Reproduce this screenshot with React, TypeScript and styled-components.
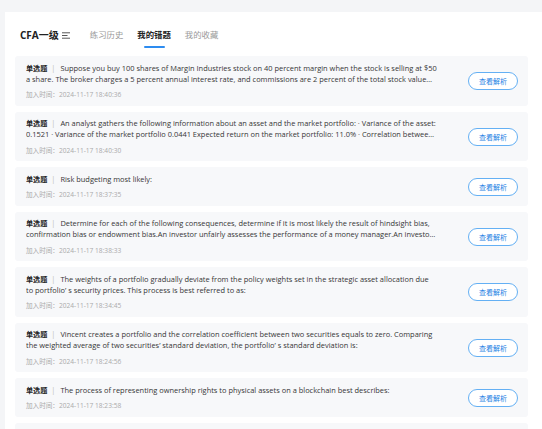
import React from "react";
import styled, { createGlobalStyle } from "styled-components";

const GlobalStyle = createGlobalStyle`
  html, body { margin: 0; padding: 0; }
  body {
    background: #f4f5f7;
    font-family: "Open Sans", "Noto Sans CJK SC", sans-serif;
    color: #333;
    overflow: hidden;
  }
`;

const Panel = styled.div`
  margin: 12px 0 0 5px;
  background: #fff;
  padding: 0 14px 0 10px;
  min-height: 420px;
`;

const Header = styled.div`
  display: flex;
  align-items: flex-start;
  height: 44px;
  box-sizing: border-box;
  padding: 17px 0 0 5px;
`;

const Title = styled.div`
  display: flex;
  align-items: center;
  gap: 3px;
  font-size: 10px;
  line-height: 12px;
  font-weight: 700;
  color: #222;
  margin-right: 20px;
`;

const Tabs = styled.div`
  display: flex;
  gap: 14px;
`;

const Tab = styled.div<{ $active?: boolean }>`
  display: flex;
  flex-direction: column;
  align-items: center;
  font-size: 8.4px;
  line-height: 12px;
  font-weight: ${(p) => (p.$active ? 700 : 400)};
  color: ${(p) => (p.$active ? "#222" : "#9a9a9a")};
`;

const Indicator = styled.div<{ $active?: boolean }>`
  width: 21px;
  height: 1.5px;
  margin-top: 5px;
  border-radius: 1px;
  background: ${(p) => (p.$active ? "#2d8cf0" : "transparent")};
`;

const List = styled.div`
  display: flex;
  flex-direction: column;
  gap: 6px;
`;

const Card = styled.div`
  display: flex;
  align-items: center;
  background: #f7f8fa;
  border-radius: 3px;
  padding: 6.5px 10px 5.5px 11px;
`;

const Body = styled.div`
  flex: 1;
  min-width: 0;
  max-width: 411px;
`;

const Question = styled.div`
  font-size: 7.45px;
  line-height: 11px;
  color: #363636;
  display: -webkit-box;
  -webkit-line-clamp: 2;
  -webkit-box-orient: vertical;
  overflow: hidden;
`;

const Kind = styled.span`
  font-weight: 700;
  color: #222;
  font-size: 7.1px;
`;

const Sep = styled.span`
  color: #bbb;
  margin: 0 5px 0 4px;
`;

const Time = styled.div`
  margin-top: 5.5px;
  font-size: 6.6px;
  line-height: 10px;
  color: #aaa;
`;

const Button = styled.button`
  margin-left: auto;
  width: 50px;
  height: 18px;
  flex-shrink: 0;
  border: 1px solid #64b0f4;
  border-radius: 9px;
  background: #fff;
  color: #1f82e4;
  font-family: "Noto Sans CJK SC", sans-serif;
  font-size: 7px;
  padding: 0;
  line-height: 16px;
`;

const MenuIcon = () => (
  <svg width="8" height="7" viewBox="0 0 8 7" fill="none" stroke="#444" strokeWidth="0.9">
    <line x1="0" y1="0.8" x2="8" y2="0.8" />
    <line x1="0" y1="3.5" x2="5.5" y2="3.5" />
    <line x1="0" y1="6.2" x2="8" y2="6.2" />
  </svg>
);

const items = [
  {
    q: "Suppose you buy 100 shares of Margin Industries stock on 40 percent margin when the stock is selling at $50 a share. The broker charges a 5 percent annual interest rate, and commissions are 2 percent of the total stock value on both the purchase and sale of the stock.",
    t: "2024-11-17 18:40:36",
  },
  {
    q: "An analyst gathers the following information about an asset and the market portfolio: · Variance of the asset: 0.1521 · Variance of the market portfolio 0.0441 Expected return on the market portfolio: 11.0% · Correlation between the asset and the market portfolio: 0.6",
    t: "2024-11-17 18:40:30",
  },
  { q: "Risk budgeting most likely:", t: "2024-11-17 18:37:35" },
  {
    q: "Determine for each of the following consequences, determine if it is most likely the result of hindsight bias, confirmation bias or endowment bias.An investor unfairly assesses the performance of a money manager.An investor overvalues an asset he owns.",
    t: "2024-11-17 18:38:33",
  },
  {
    q: "The weights of a portfolio gradually deviate from the policy weights set in the strategic asset allocation due to portfolio’  s security prices. This process is best referred to as:",
    t: "2024-11-17 18:34:45",
  },
  {
    q: "Vincent creates a portfolio and the correlation coefficient between two securities equals to zero. Comparing the weighted average of two securities’   standard deviation, the portfolio’  s standard deviation is:",
    t: "2024-11-17 18:24:56",
  },
  {
    q: "The process of representing ownership rights to physical assets on a blockchain best describes:",
    t: "2024-11-17 18:23:58",
  },
  {
    q: "Which of the following is most likely a characteristic of a permissioned network?",
    t: "2024-11-17 18:20:12",
  },
];

export default function App() {
  return (
    <>
      <GlobalStyle />
      <Panel>
        <Header>
          <Title>
            CFA一级
            <MenuIcon />
          </Title>
          <Tabs>
            <Tab>
              练习历史
              <Indicator />
            </Tab>
            <Tab $active>
              我的错题
              <Indicator $active />
            </Tab>
            <Tab>
              我的收藏
              <Indicator />
            </Tab>
          </Tabs>
        </Header>
        <List>
          {items.map((it, i) => (
            <Card key={i}>
              <Body>
                <Question>
                  <Kind>单选题</Kind>
                  <Sep>|</Sep>
                  {it.q}
                </Question>
                <Time>加入时间：{it.t}</Time>
              </Body>
              <Button>查看解析</Button>
            </Card>
          ))}
        </List>
      </Panel>
    </>
  );
}
